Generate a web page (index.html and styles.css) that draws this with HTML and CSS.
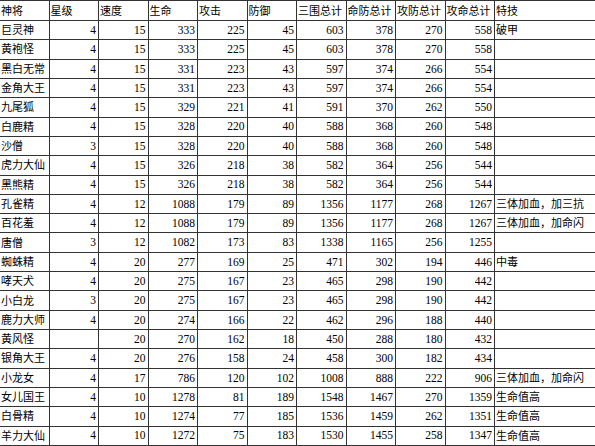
FILE: index.html
```html
<!DOCTYPE html>
<html lang="zh-CN">
<head>
<meta charset="utf-8">
<title>神将属性表</title>
<link rel="stylesheet" href="styles.css">
</head>
<body>
<div class="sheet">
  <div class="row head">
    <div class="c">神将</div><div class="c">星级</div><div class="c">速度</div><div class="c">生命</div><div class="c">攻击</div><div class="c">防御</div><div class="c">三围总计</div><div class="c">命防总计</div><div class="c">攻防总计</div><div class="c">攻命总计</div><div class="c last">特技</div>
  </div>
  <div class="row"><div class="c">巨灵神</div><div class="c n">4</div><div class="c n">15</div><div class="c n">333</div><div class="c n">225</div><div class="c n">45</div><div class="c n">603</div><div class="c n">378</div><div class="c n">270</div><div class="c n">558</div><div class="c last">破甲</div></div>
  <div class="row"><div class="c">黄袍怪</div><div class="c n">4</div><div class="c n">15</div><div class="c n">333</div><div class="c n">225</div><div class="c n">45</div><div class="c n">603</div><div class="c n">378</div><div class="c n">270</div><div class="c n">558</div><div class="c last"></div></div>
  <div class="row"><div class="c">黑白无常</div><div class="c n">4</div><div class="c n">15</div><div class="c n">331</div><div class="c n">223</div><div class="c n">43</div><div class="c n">597</div><div class="c n">374</div><div class="c n">266</div><div class="c n">554</div><div class="c last"></div></div>
  <div class="row"><div class="c">金角大王</div><div class="c n">4</div><div class="c n">15</div><div class="c n">331</div><div class="c n">223</div><div class="c n">43</div><div class="c n">597</div><div class="c n">374</div><div class="c n">266</div><div class="c n">554</div><div class="c last"></div></div>
  <div class="row"><div class="c">九尾狐</div><div class="c n">4</div><div class="c n">15</div><div class="c n">329</div><div class="c n">221</div><div class="c n">41</div><div class="c n">591</div><div class="c n">370</div><div class="c n">262</div><div class="c n">550</div><div class="c last"></div></div>
  <div class="row"><div class="c">白鹿精</div><div class="c n">4</div><div class="c n">15</div><div class="c n">328</div><div class="c n">220</div><div class="c n">40</div><div class="c n">588</div><div class="c n">368</div><div class="c n">260</div><div class="c n">548</div><div class="c last"></div></div>
  <div class="row"><div class="c">沙僧</div><div class="c n">3</div><div class="c n">15</div><div class="c n">328</div><div class="c n">220</div><div class="c n">40</div><div class="c n">588</div><div class="c n">368</div><div class="c n">260</div><div class="c n">548</div><div class="c last"></div></div>
  <div class="row"><div class="c">虎力大仙</div><div class="c n">4</div><div class="c n">15</div><div class="c n">326</div><div class="c n">218</div><div class="c n">38</div><div class="c n">582</div><div class="c n">364</div><div class="c n">256</div><div class="c n">544</div><div class="c last"></div></div>
  <div class="row"><div class="c">黑熊精</div><div class="c n">4</div><div class="c n">15</div><div class="c n">326</div><div class="c n">218</div><div class="c n">38</div><div class="c n">582</div><div class="c n">364</div><div class="c n">256</div><div class="c n">544</div><div class="c last"></div></div>
  <div class="row"><div class="c">孔雀精</div><div class="c n">4</div><div class="c n">12</div><div class="c n">1088</div><div class="c n">179</div><div class="c n">89</div><div class="c n">1356</div><div class="c n">1177</div><div class="c n">268</div><div class="c n">1267</div><div class="c last">三体加血，加三抗</div></div>
  <div class="row"><div class="c">百花羞</div><div class="c n">4</div><div class="c n">12</div><div class="c n">1088</div><div class="c n">179</div><div class="c n">89</div><div class="c n">1356</div><div class="c n">1177</div><div class="c n">268</div><div class="c n">1267</div><div class="c last">三体加血，加命闪</div></div>
  <div class="row"><div class="c">唐僧</div><div class="c n">3</div><div class="c n">12</div><div class="c n">1082</div><div class="c n">173</div><div class="c n">83</div><div class="c n">1338</div><div class="c n">1165</div><div class="c n">256</div><div class="c n">1255</div><div class="c last"></div></div>
  <div class="row"><div class="c">蜘蛛精</div><div class="c n">4</div><div class="c n">20</div><div class="c n">277</div><div class="c n">169</div><div class="c n">25</div><div class="c n">471</div><div class="c n">302</div><div class="c n">194</div><div class="c n">446</div><div class="c last">中毒</div></div>
  <div class="row"><div class="c">哮天犬</div><div class="c n">4</div><div class="c n">20</div><div class="c n">275</div><div class="c n">167</div><div class="c n">23</div><div class="c n">465</div><div class="c n">298</div><div class="c n">190</div><div class="c n">442</div><div class="c last"></div></div>
  <div class="row"><div class="c">小白龙</div><div class="c n">3</div><div class="c n">20</div><div class="c n">275</div><div class="c n">167</div><div class="c n">23</div><div class="c n">465</div><div class="c n">298</div><div class="c n">190</div><div class="c n">442</div><div class="c last"></div></div>
  <div class="row"><div class="c">鹿力大师</div><div class="c n">4</div><div class="c n">20</div><div class="c n">274</div><div class="c n">166</div><div class="c n">22</div><div class="c n">462</div><div class="c n">296</div><div class="c n">188</div><div class="c n">440</div><div class="c last"></div></div>
  <div class="row"><div class="c">黄风怪</div><div class="c n"></div><div class="c n">20</div><div class="c n">270</div><div class="c n">162</div><div class="c n">18</div><div class="c n">450</div><div class="c n">288</div><div class="c n">180</div><div class="c n">432</div><div class="c last"></div></div>
  <div class="row"><div class="c">银角大王</div><div class="c n">4</div><div class="c n">20</div><div class="c n">276</div><div class="c n">158</div><div class="c n">24</div><div class="c n">458</div><div class="c n">300</div><div class="c n">182</div><div class="c n">434</div><div class="c last"></div></div>
  <div class="row"><div class="c">小龙女</div><div class="c n">4</div><div class="c n">17</div><div class="c n">786</div><div class="c n">120</div><div class="c n">102</div><div class="c n">1008</div><div class="c n">888</div><div class="c n">222</div><div class="c n">906</div><div class="c last">三体加血，加命闪</div></div>
  <div class="row"><div class="c">女儿国王</div><div class="c n">4</div><div class="c n">10</div><div class="c n">1278</div><div class="c n">81</div><div class="c n">189</div><div class="c n">1548</div><div class="c n">1467</div><div class="c n">270</div><div class="c n">1359</div><div class="c last">生命值高</div></div>
  <div class="row"><div class="c">白骨精</div><div class="c n">4</div><div class="c n">10</div><div class="c n">1274</div><div class="c n">77</div><div class="c n">185</div><div class="c n">1536</div><div class="c n">1459</div><div class="c n">262</div><div class="c n">1351</div><div class="c last">生命值高</div></div>
  <div class="row"><div class="c">羊力大仙</div><div class="c n">4</div><div class="c n">10</div><div class="c n">1272</div><div class="c n">75</div><div class="c n">183</div><div class="c n">1530</div><div class="c n">1455</div><div class="c n">258</div><div class="c n">1347</div><div class="c last">生命值高</div></div>
</div>
</body>
</html>
```
FILE: styles.css
```css
html, body {
  margin: 0;
  padding: 0;
  background: #ffffff;
}

.sheet {
  width: 595px;
  height: 446px;
  overflow: hidden;
  border-top: 1px solid #333333;
  box-sizing: border-box;
  font-family: "Liberation Serif", "Noto Sans CJK SC", serif;
  font-size: 11px;
  color: #000000;
}

.row {
  display: grid;
  grid-template-columns: repeat(10, 49.5px) 1fr;
  height: 19.32px;
}

.row.head {
  height: 20px;
}

.c {
  box-sizing: border-box;
  border-right: 1px solid #333333;
  border-bottom: 1px solid #333333;
  display: flex;
  align-items: center;
  padding: 1px 1px 0 1px;
  white-space: nowrap;
  overflow: hidden;
  line-height: 1;
}

.c.n {
  justify-content: flex-end;
  padding-right: 2px;
  font-size: 11.5px;
}

.c.last {
  border-right: none;
}
```
